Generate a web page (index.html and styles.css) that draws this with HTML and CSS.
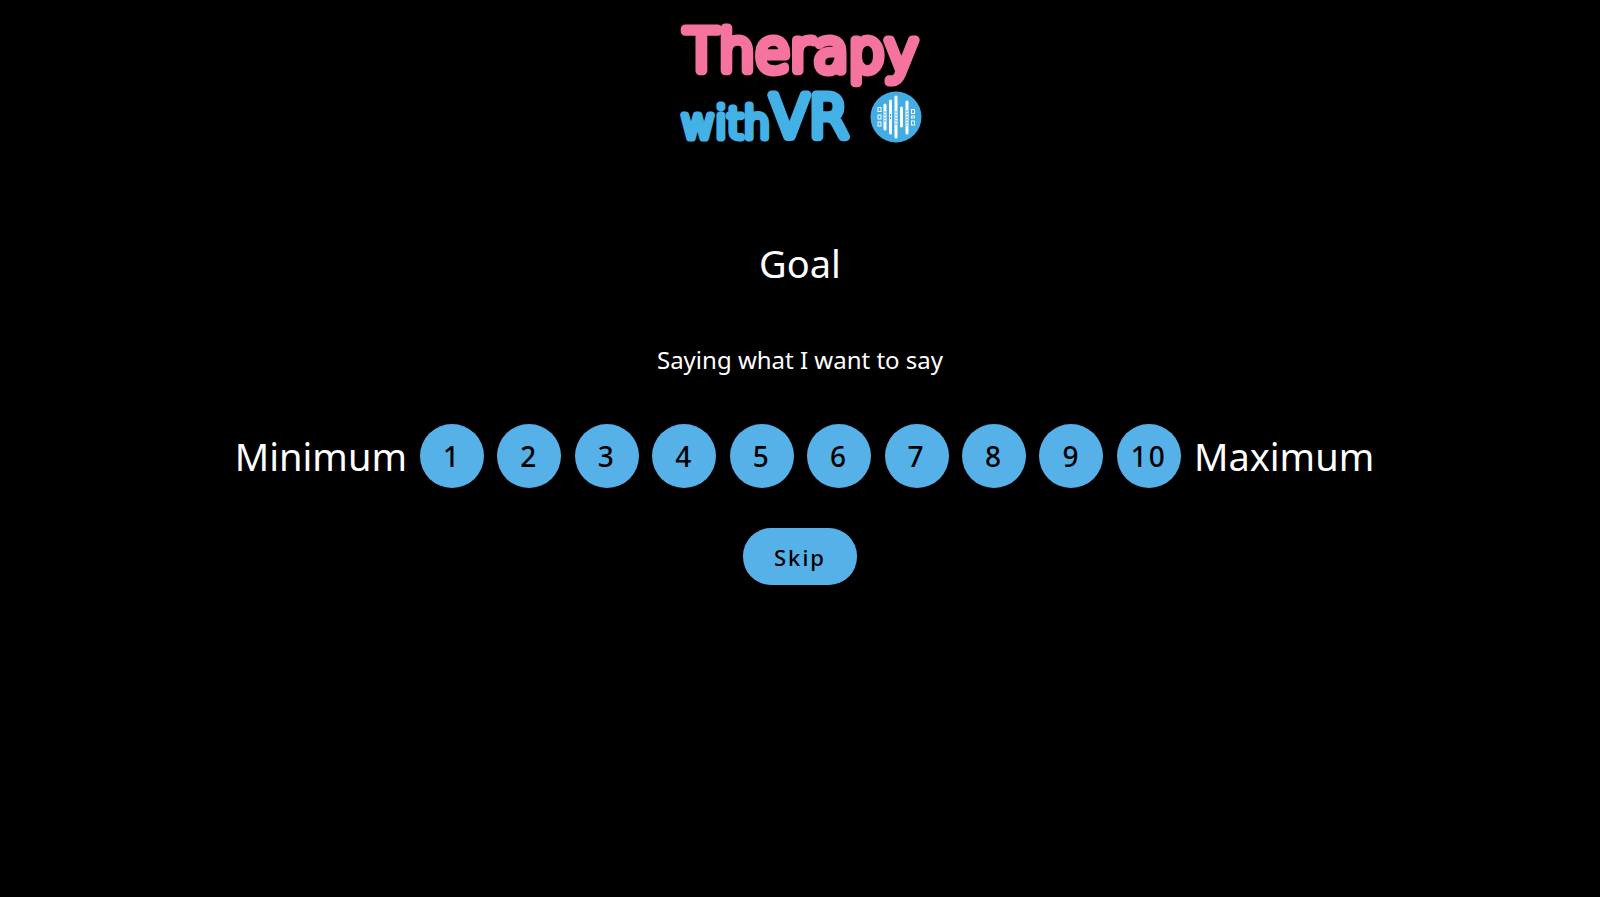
FILE: index.html
```html
<!DOCTYPE html>
<html lang="en">
<head>
<meta charset="utf-8">
<meta name="viewport" content="width=device-width, initial-scale=1">
<title>Therapy withVR</title>
<link rel="stylesheet" href="styles.css">
</head>
<body>
<header class="header">
  <svg class="logo" viewBox="0 0 246 145" role="img" aria-label="Therapy withVR">
    <text class="logo-therapy" x="7" y="61">Therapy</text>
    <text class="logo-with" x="4" y="128">with</text>
    <text class="logo-vr" x="93" y="127">VR</text>
    <circle class="badge" cx="219" cy="107" r="25.5"/>
    <g class="bars">
      <path d="M208 95V119M213.500 91V123M219 87V127M224.500 98V116M230 92V123"/>
    </g>
    <g class="bar-gaps">
      <path d="M208 101V113M213.500 104V109M219 101V115M230 100V116"/>
    </g>
    <g class="outer-bars">
      <rect x="201" y="97.500" width="3" height="4"/>
      <rect x="201" y="105" width="3" height="4"/>
      <rect x="201" y="112" width="3" height="4"/>
      <rect x="234.500" y="99.500" width="3" height="4"/>
      <rect x="234.500" y="106" width="3" height="2"/>
      <rect x="234.500" y="111" width="3" height="4"/>
    </g>
  </svg>
</header>
<main class="survey">
  <h1 class="title">Goal</h1>
  <p class="question">Saying what I want to say</p>
  <div class="rating">
    <span class="bound">Minimum</span>
    <div class="scale" role="group" aria-label="Rating">
      <button class="btn score" type="button">1</button>
      <button class="btn score" type="button">2</button>
      <button class="btn score" type="button">3</button>
      <button class="btn score" type="button">4</button>
      <button class="btn score" type="button">5</button>
      <button class="btn score" type="button">6</button>
      <button class="btn score" type="button">7</button>
      <button class="btn score" type="button">8</button>
      <button class="btn score" type="button">9</button>
      <button class="btn score" type="button">10</button>
    </div>
    <span class="bound">Maximum</span>
  </div>
  <button class="btn skip" type="button">Skip</button>
</main>
</body>
</html>
```

FILE: styles.css
```css
* {
  box-sizing: border-box;
}

body {
  margin: 0;
  min-height: 100vh;
  background: #000;
  color: #fff;
  font-family: "Noto Sans", sans-serif;
}

.header {
  display: flex;
  justify-content: center;
  padding-top: 10px;
}

.logo {
  width: 246px;
  height: 145px;
  overflow: visible;
}

.logo text {
  font-family: "DejaVu Sans", Verdana, sans-serif;
  font-weight: 200;
  stroke-width: 9px;
  stroke-linejoin: round;
}

.logo-therapy {
  fill: #f4739f;
  stroke: #f4739f;
  font-size: 57px;
}

.logo .logo-with {
  fill: #43b0e6;
  stroke: #43b0e6;
  stroke-width: 7px;
  font-size: 42px;
}

.logo-vr {
  fill: #43b0e6;
  stroke: #43b0e6;
  font-size: 57px;
}

.badge {
  fill: #43ace2;
}

.bars {
  fill: none;
  stroke: #fff;
  stroke-width: 3;
  stroke-linecap: round;
}

.bar-gaps {
  fill: none;
  stroke: #43ace2;
  stroke-width: 1;
  stroke-dasharray: 2 1;
}

.outer-bars {
  fill: none;
  stroke: #fff;
  stroke-width: 1;
}

.survey {
  display: flex;
  flex-direction: column;
  align-items: center;
  padding-top: 80px;
}

.title,
.bound {
  font-size: 38px;
  font-weight: 400;
  line-height: 56px;
}

.title {
  margin: 0;
}

.question {
  margin: 49px 0 0;
  font-size: 24px;
  line-height: 40px;
}

.rating {
  display: flex;
  align-items: center;
  justify-content: center;
  gap: 13px;
  margin-top: 44px;
  padding-left: 9px;
}

.scale {
  display: flex;
  justify-content: space-between;
  width: 761px;
}

.btn {
  border: 0;
  padding: 0;
  background: #55b1e7;
  color: #000;
  font-family: inherit;
  font-weight: 500;
  letter-spacing: 2px;
  cursor: pointer;
}

.score {
  width: 64px;
  height: 64px;
  border-radius: 50%;
  font-size: 28px;
}

.skip {
  margin-top: 40px;
  padding: 0 31px;
  height: 57px;
  border-radius: 28px;
  font-size: 22px;
}
```
